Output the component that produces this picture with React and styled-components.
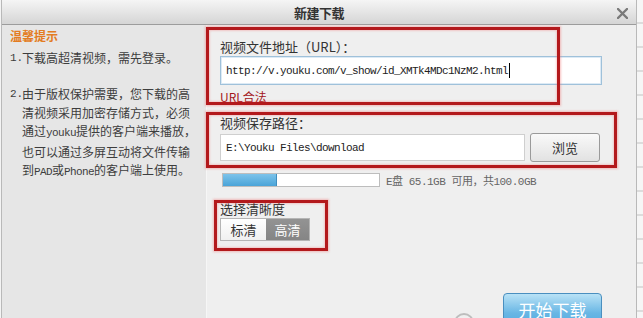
import React from "react";
import styled, { createGlobalStyle } from "styled-components";

const Global = createGlobalStyle`
  html, body { margin: 0; padding: 0; background: #f4f4f4; }
  body { font-family: "Noto Sans CJK SC", "Noto Sans", sans-serif; }
`;

const Screen = styled.div`
  width: 643px;
  height: 318px;
  overflow: hidden;
  display: flex;
  background: #f4f4f4;
`;

const Dialog = styled.div`
  width: 634px;
  height: 360px;
  margin-left: 1px;
  border-left: 1px solid #b9b9b9;
  border-right: 1px solid #b9b9b9;
  display: flex;
  flex-direction: column;
  flex: none;
`;

const Sliver = styled.div`
  flex: 1;
  background: repeating-linear-gradient(
    180deg,
    #f6f6f6 0px,
    #f6f6f6 22px,
    #dcdcdc 22px,
    #dcdcdc 24px
  );
`;

const TitleBar = styled.div`
  height: 24px;
  border-bottom: 1px solid #9c9c9c;
  background: linear-gradient(#f5f5f5, #d5d5d5);
  border-radius: 3px 3px 0 0;
  display: flex;
  align-items: center;
  justify-content: center;
  position: relative;
  flex: none;
`;

const Title = styled.div`
  font-size: 13px;
  font-weight: 700;
  color: #333;
  letter-spacing: -0.5px;
`;

const Close = styled.div`
  position: absolute;
  right: 8px;
  top: 8px;
  width: 11px;
  height: 11px;
  display: flex;
`;

const Body = styled.div`
  flex: 1;
  display: flex;
`;

const Sidebar = styled.div`
  flex: none;
  background: #e6e6e6;
  border-right: 1px solid #f6f6f6;
  padding: 3px 0 0 8px;
  box-sizing: border-box;
  width: 205px;
  color: #3d3d3d;
`;

const TipHead = styled.div`
  font-size: 12px;
  font-weight: 700;
  color: #e37c22;
  line-height: 16px;
  margin-bottom: 5px;
`;

const TipItem = styled.div`
  display: flex;
  font-size: 12px;
  line-height: 18.6px;
  margin-bottom: ${(p) => p.gap || 0}px;
`;

const TipNum = styled.span`
  width: 12px;
  flex: none;
  font-family: "Liberation Mono", monospace;
  font-size: 11px;
`;

const TipText = styled.div`
  display: flex;
  flex-direction: column;
  white-space: nowrap;
`;

const Ascii = styled.span`
  font-family: "Liberation Mono", monospace;
  font-size: 11px;
  letter-spacing: -0.6px;
`;

const Main = styled.div`
  flex: 1;
  position: relative;
  background: #efefef;
  padding: 14px 0 0 13px;
  display: flex;
  flex-direction: column;
  align-items: flex-start;
`;

const Label = styled.div`
  font-size: 13px;
  line-height: 16px;
  color: #333;
  margin-top: ${(p) => p.top || 0}px;
`;

const UrlInput = styled.div`
  width: 382px;
  height: 29px;
  box-sizing: border-box;
  margin-top: 1px;
  background: #fff;
  border: 1px solid #9fc1da;
  box-shadow: inset 0 0 0 1px #dceaf5;
  display: flex;
  align-items: center;
  padding-left: 5px;
`;

const Mono = styled.span`
  font-family: "Liberation Mono", "Noto Sans CJK SC", monospace;
  font-size: 11px;
  letter-spacing: -0.6px;
  color: #222;
`;

const Caret = styled.span`
  width: 1px;
  height: 15px;
  background: #000;
  margin-left: 1px;
`;

const Valid = styled.div`
  font-size: 12px;
  line-height: 16px;
  color: #a3161a;
  margin-top: 4px;
`;

const PathRow = styled.div`
  display: flex;
  align-items: center;
  gap: 5px;
  margin-top: 2px;
`;

const PathInput = styled.div`
  width: 305px;
  height: 27px;
  box-sizing: border-box;
  background: #fff;
  border: 1px solid #cfcfcf;
  display: flex;
  align-items: center;
  padding-left: 5px;
`;

const Button = styled.div`
  width: 70px;
  height: 29px;
  box-sizing: border-box;
  border: 1px solid #9a9a9a;
  border-radius: 3px;
  background: linear-gradient(#f9f9f9, #e2e2e2);
  display: flex;
  align-items: center;
  justify-content: center;
  font-size: 13px;
  color: #333;
`;

const DiskRow = styled.div`
  display: flex;
  align-items: center;
  gap: 6px;
  margin-top: 10px;
  padding-left: 2px;
`;

const Bar = styled.div`
  width: 158px;
  height: 14px;
  box-sizing: border-box;
  border: 1px solid #bdbdbd;
  background: #fff;
  display: flex;
`;

const Fill = styled.div`
  height: 100%;
  background: linear-gradient(#7cc3ea, #4aa4d8);
  border-right: 1px solid #3f8dbd;
`;

const DiskText = styled.span`
  font-family: "Liberation Mono", "Noto Sans CJK SC", monospace;
  font-size: 11px;
  letter-spacing: -0.5px;
  color: #666;
`;

const Segment = styled.div`
  display: flex;
  margin-top: 1px;
  border: 1px solid #b5b5b5;
`;

const SegItem = styled.div`
  width: ${(p) => p.w}px;
  height: 21px;
  display: flex;
  align-items: center;
  justify-content: center;
  font-size: 13px;
  color: ${(p) => (p.active ? "#fff" : "#333")};
  background: ${(p) =>
    p.active ? "linear-gradient(#939393, #858585)" : "linear-gradient(#ffffff, #f0f0f0)"};
`;

const Footer = styled.div`
  align-self: stretch;
  display: flex;
  justify-content: flex-end;
  align-items: flex-start;
  padding-right: 34px;
  margin-top: 52px;
  gap: 29px;
`;

const HelpRing = styled.div`
  width: 20px;
  height: 20px;
  border-radius: 50%;
  border: 2px solid #bdbdbd;
  box-sizing: border-box;
  margin-top: 20px;
`;

const StartButton = styled.div`
  width: 99px;
  height: 34px;
  box-sizing: border-box;
  border: 1px solid #4a8fbf;
  border-radius: 4px;
  background: linear-gradient(#b9e2f6, #68b6e4 60%, #57abe0);
  color: #fff;
  font-size: 17px;
  line-height: 20px;
  display: flex;
  align-items: center;
  justify-content: center;
`;

const Mark = styled.div`
  position: absolute;
  left: ${(p) => p.x}px;
  top: ${(p) => p.y}px;
  width: ${(p) => p.w}px;
  height: ${(p) => p.h}px;
  box-sizing: border-box;
  border: 3px solid #b3191c;
  box-shadow: 0 0 2px 1px rgba(240, 120, 120, 0.45), inset 0 0 2px 1px rgba(240, 120, 120, 0.35);
  pointer-events: none;
`;

const FILL_PX = 53;

export default function App() {
  return (
    <>
      <Global />
      <Screen>
        <Dialog>
          <TitleBar>
            <Title>新建下载</Title>
            <Close>
              <svg width="11" height="11" viewBox="0 0 11 11">
                <path d="M1 1 L10 10 M10 1 L1 10" stroke="#7a7a7a" strokeWidth="2.4" strokeLinecap="round" />
              </svg>
            </Close>
          </TitleBar>
          <Body>
            <Sidebar>
              <TipHead>温馨提示</TipHead>
              <TipItem gap={17.5}>
                <TipNum>1.</TipNum>
                <TipText>
                  <span>下载高超清视频，需先登录。</span>
                </TipText>
              </TipItem>
              <TipItem>
                <TipNum>2.</TipNum>
                <TipText>
                  <span>由于版权保护需要，您下载的高</span>
                  <span>清视频采用加密存储方式，必须</span>
                  <span>
                    通过<Ascii>youku</Ascii>提供的客户端来播放，
                  </span>
                  <span>也可以通过多屏互动将文件传输</span>
                  <span>
                    到<Ascii>PAD</Ascii>或<Ascii>Phone</Ascii>的客户端上使用。
                  </span>
                </TipText>
              </TipItem>
            </Sidebar>
            <Main>
              <Label>视频文件地址（URL）：</Label>
              <UrlInput>
                <Mono>http://v.youku.com/v_show/id_XMTk4MDc1NzM2.html</Mono>
                <Caret />
              </UrlInput>
              <Valid>URL合法</Valid>
              <Label top={10}>视频保存路径：</Label>
              <PathRow>
                <PathInput>
                  <Mono>E:\Youku Files\download</Mono>
                </PathInput>
                <Button>浏览</Button>
              </PathRow>
              <DiskRow>
                <Bar>
                  <Fill style={{ width: `${FILL_PX}px` }} />
                </Bar>
                <DiskText>E盘 65.1GB 可用，共100.0GB</DiskText>
              </DiskRow>
              <Label top={13}>选择清晰度</Label>
              <Segment>
                <SegItem w={45}>标清</SegItem>
                <SegItem w={43} active>
                  高清
                </SegItem>
              </Segment>
              <Footer>
                <HelpRing />
                <StartButton>开始下载</StartButton>
              </Footer>
              <Mark x={-1} y={2} w={354} h={78} />
              <Mark x={-1} y={87} w={411} h={56} />
              <Mark x={7} y={175} w={114} h={51} />
            </Main>
          </Body>
        </Dialog>
        <Sliver />
      </Screen>
    </>
  );
}
